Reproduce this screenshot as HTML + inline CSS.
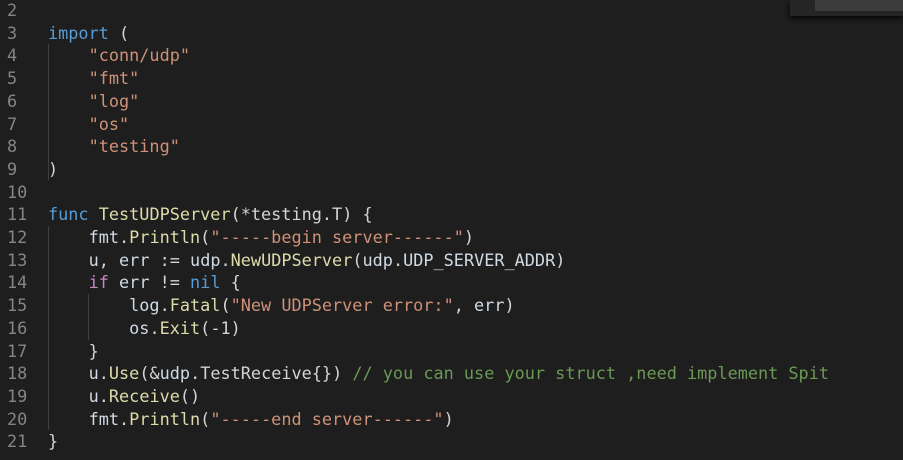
<!DOCTYPE html><html><head><style>
body{margin:0;width:903px;height:460px;background:#1e1e1e;overflow:hidden;position:relative;font-family:"DejaVu Sans Mono","Liberation Mono",monospace;font-size:16.85px;color:#d4d4d4}
.l{position:absolute;left:0;height:22.7px;line-height:22.7px;white-space:pre}
.n{position:absolute;left:7px;color:#858585;width:20px}
.c{position:absolute;left:48px}
.k{color:#569cd6}.s{color:#ce9178}.f{color:#dcdcaa}.p{color:#c586c0}.v{color:#d0dae4}.g{color:#6a9955}.t{color:#d4d4d4}
.guide{position:absolute;width:1px;background:#404040}
</style></head><body>
<div class="guide" style="left:48px;top:44px;height:136px"></div>
<div class="guide" style="left:48px;top:226px;height:204px"></div>
<div class="guide" style="left:88px;top:294px;height:46px"></div>
<div style="position:absolute;left:790px;top:0;width:113px;height:16px;background:#252526;box-shadow:0 2px 6px #000"><div style="position:absolute;left:25px;top:0;width:88px;height:11px;background:#3c3c3c"></div></div>
<div id="code"></div>
<script>
const L=[
['2',''],
['3','<span class="k">import</span> ('],
['4','    <span class="s">"conn/udp"</span>'],
['5','    <span class="s">"fmt"</span>'],
['6','    <span class="s">"log"</span>'],
['7','    <span class="s">"os"</span>'],
['8','    <span class="s">"testing"</span>'],
['9',')'],
['10',''],
['11','<span class="k">func</span> <span class="f">TestUDPServer</span>(*<span class="t">testing</span>.<span class="t">T</span>) {'],
['12','    <span class="v">fmt</span>.<span class="f">Println</span>(<span class="s">"-----begin server------"</span>)'],
['13','    <span class="v">u</span>, <span class="v">err</span> := <span class="v">udp</span>.<span class="f">NewUDPServer</span>(<span class="v">udp</span>.<span class="v">UDP_SERVER_ADDR</span>)'],
['14','    <span class="p">if</span> <span class="v">err</span> != <span class="k">nil</span> {'],
['15','        <span class="v">log</span>.<span class="f">Fatal</span>(<span class="s">"New UDPServer error:"</span>, <span class="v">err</span>)'],
['16','        <span class="v">os</span>.<span class="f">Exit</span>(-1)'],
['17','    }'],
['18','    <span class="v">u</span>.<span class="f">Use</span>(&amp;<span class="v">udp</span>.<span class="t">TestReceive</span>{}) <span class="g">// you can use your struct ,need implement Spit</span>'],
['19','    <span class="v">u</span>.<span class="f">Receive</span>()'],
['20','    <span class="v">fmt</span>.<span class="f">Println</span>(<span class="s">"-----end server------"</span>)'],
['21','}']];
let h='';L.forEach((x,i)=>{h+='<div class="l" style="top:'+(-1+i*22.7)+'px"><span class="n">'+x[0]+'</span><span class="c">'+x[1]+'</span></div>'});
document.getElementById('code').innerHTML=h;
</script>
</body></html>
